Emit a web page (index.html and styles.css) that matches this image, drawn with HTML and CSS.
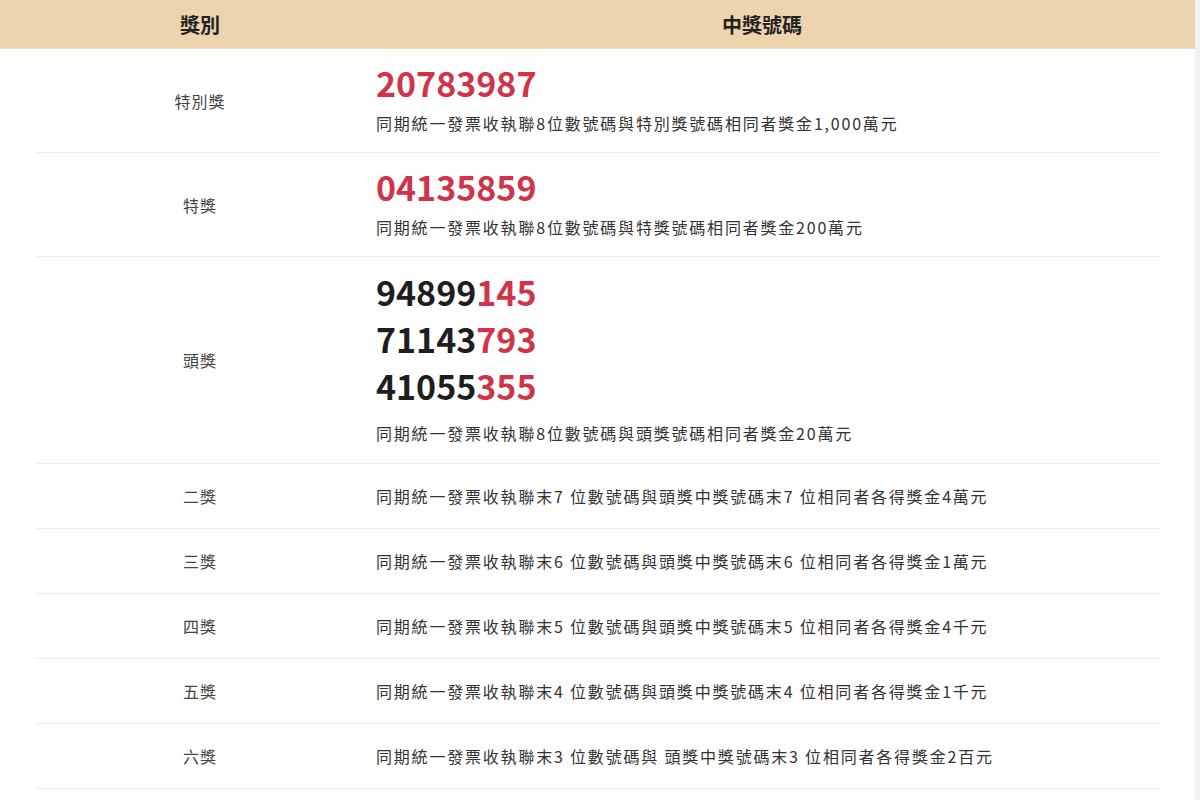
FILE: index.html
```html
<!DOCTYPE html>
<html lang="zh-Hant">
<head>
<meta charset="utf-8">
<title>中獎號碼</title>
<link rel="stylesheet" href="styles.css">
</head>
<body>
<div class="page">
  <div class="head">
    <div class="grid">
      <div class="c1">獎別</div>
      <div class="c2 center">中獎號碼</div>
    </div>
  </div>
  <div class="table">
    <div class="row r-big">
      <div class="c1">特別獎</div>
      <div class="c2">
        <div class="num red">20783987</div>
        <div class="desc">同期統一發票收執聯8位數號碼與特別獎號碼相同者獎金1,000萬元</div>
      </div>
    </div>
    <div class="row r-big">
      <div class="c1">特獎</div>
      <div class="c2">
        <div class="num red">04135859</div>
        <div class="desc">同期統一發票收執聯8位數號碼與特獎號碼相同者獎金200萬元</div>
      </div>
    </div>
    <div class="row r-head">
      <div class="c1">頭獎</div>
      <div class="c2">
        <div class="num">94899<span class="red">145</span></div>
        <div class="num">71143<span class="red">793</span></div>
        <div class="num">41055<span class="red">355</span></div>
        <div class="desc desc-gap">同期統一發票收執聯8位數號碼與頭獎號碼相同者獎金20萬元</div>
      </div>
    </div>
    <div class="row r-small">
      <div class="c1">二獎</div>
      <div class="c2"><div class="desc">同期統一發票收執聯末7 位數號碼與頭獎中獎號碼末7 位相同者各得獎金4萬元</div></div>
    </div>
    <div class="row r-small">
      <div class="c1">三獎</div>
      <div class="c2"><div class="desc">同期統一發票收執聯末6 位數號碼與頭獎中獎號碼末6 位相同者各得獎金1萬元</div></div>
    </div>
    <div class="row r-small">
      <div class="c1">四獎</div>
      <div class="c2"><div class="desc">同期統一發票收執聯末5 位數號碼與頭獎中獎號碼末5 位相同者各得獎金4千元</div></div>
    </div>
    <div class="row r-small">
      <div class="c1">五獎</div>
      <div class="c2"><div class="desc">同期統一發票收執聯末4 位數號碼與頭獎中獎號碼末4 位相同者各得獎金1千元</div></div>
    </div>
    <div class="row r-small">
      <div class="c1">六獎</div>
      <div class="c2"><div class="desc">同期統一發票收執聯末3 位數號碼與 頭獎中獎號碼末3 位相同者各得獎金2百元</div></div>
    </div>
  </div>
</div>
</body>
</html>
```
FILE: styles.css
```css
* { box-sizing: border-box; }
html, body {
  margin: 0;
  padding: 0;
  background: #ffffff;
}
body {
  font-family: "Noto Sans CJK TC", "Noto Sans", sans-serif;
  color: #333333;
  width: 1200px;
  height: 800px;
  overflow: hidden;
}
.page {
  width: 1200px;
  border-right: 5px solid #f2f2f2;
  height: 800px;
}
.head {
  background: #edd4ae;
  height: 49px;
  border-bottom: 1px solid #e9dcc4;
  font-weight: 700;
  font-size: 20px;
  color: #222222;
}
.grid, .row {
  display: grid;
  grid-template-columns: 328px 796px;
  margin-left: 36px;
  width: 1124px;
}
.grid {
  height: 48px;
  align-items: center;
}
.head .c1, .head .c2 { text-align: center; }
.row {
  border-bottom: 1px solid #ececec;
  align-items: center;
}
.row .c1 {
  text-align: center;
  font-size: 16px;
  letter-spacing: 1px;
  color: #444444;
}
.row .c2 {
  padding-left: 12px;
}
.r-big { height: 104px; }
.r-head { height: 207px; }
.r-small { height: 65px; }
.r-big .c2 { padding-bottom: 6px; }
.r-head .c2 { padding-bottom: 7px; }
.num {
  font-size: 34px;
  font-weight: 700;
  line-height: 47px;
  color: #1e1e1e;
}
.r-big .num { line-height: 44px; margin-bottom: 6px; }
.red { color: #d0344a; }
.desc {
  font-size: 16px;
  letter-spacing: 1.8px;
  line-height: 24px;
  color: #333333;
}
.desc-gap { margin-top: 12px; }
```
